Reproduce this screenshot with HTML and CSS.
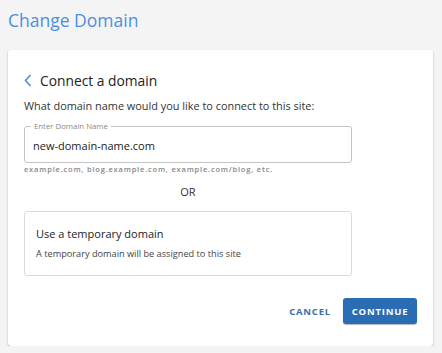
FILE: index.html
```html
<!DOCTYPE html>
<html>
<head>
<meta charset="utf-8">
<link rel="stylesheet" href="styles.css">
</head>
<body>
<div class="page">
  <h1 class="title">Change Domain</h1>
  <div class="card">
    <div class="head">
      <svg class="back" width="8" height="13" viewBox="0 0 8 13"><path d="M6.5 1 L1.5 6.5 L6.5 12" fill="none" stroke="#4a8fe0" stroke-width="1.6"/></svg>
      <span class="head-text">Connect a domain</span>
    </div>
    <p class="question">What domain name would you like to connect to this site:</p>
    <div class="field">
      <span class="field-label">Enter Domain Name</span>
      <div class="field-value">new-domain-name.com</div>
    </div>
    <div class="hint">example.com, blog.example.com, example.com/blog, etc.</div>
    <div class="or">OR</div>
    <div class="temp">
      <div class="temp-title">Use a temporary domain</div>
      <div class="temp-desc">A temporary domain will be assigned to this site</div>
    </div>
    <div class="actions">
      <button class="btn-cancel">CANCEL</button>
      <button class="btn-continue">CONTINUE</button>
    </div>
  </div>
</div>
</body>
</html>
```

FILE: styles.css
```css
html, body {
  margin: 0;
  padding: 0;
  background: #f4f4f4;
  font-family: "Open Sans", "Noto Sans", sans-serif;
}
.page {
  padding: 8px 9px 0 8px;
}
.title {
  margin: 0;
  height: 42px;
  font-size: 17.5px;
  font-weight: 400;
  color: #4a90e2;
  line-height: 24px;
}
.card {
  background: #fff;
  border-radius: 3px;
  box-shadow: 0 1px 2px rgba(0,0,0,0.35);
  height: 296px;
  box-sizing: border-box;
  padding: 20px 16px 0 16px;
}
.head {
  display: flex;
  align-items: center;
  gap: 8px;
  height: 20px;
}
.back {
  display: block;
}
.head-text {
  font-size: 13.8px;
  font-weight: 500;
  color: #222;
}
.question {
  margin: 8px 0 0 0;
  font-size: 10.9px;
  color: #333;
  line-height: 16px;
}
.field {
  position: relative;
  margin-top: 12px;
  width: 328px;
  height: 37px;
  box-sizing: border-box;
  border: 1px solid #c4c4c4;
  border-radius: 3px;
  display: flex;
  align-items: center;
  padding-left: 8px;
}
.field-label {
  position: absolute;
  left: 6px;
  top: -6px;
  padding: 0 3px;
  background: #fff;
  font-size: 7.8px;
  color: #888;
  line-height: 10px;
}
.field-value {
  font-size: 11px;
  color: #222;
  padding-top: 2px;
}
.hint {
  margin-top: 0;
  font-size: 7.5px;
  font-weight: 600;
  letter-spacing: 0.8px;
  color: #888;
  line-height: 12px;
}
.or {
  width: 328px;
  text-align: center;
  font-size: 11px;
  color: #333;
  margin-top: 9px;
  line-height: 16px;
}
.temp {
  margin-top: 11px;
  width: 328px;
  height: 65px;
  box-sizing: border-box;
  border: 1px solid #dcdcdc;
  border-radius: 3px;
  padding: 13px 12px 0 11px;
}
.temp-title {
  font-size: 11px;
  font-weight: 500;
  color: #222;
  line-height: 18px;
}
.temp-desc {
  margin-top: 4px;
  font-size: 9.2px;
  color: #444;
  line-height: 13px;
}
.actions {
  display: flex;
  justify-content: flex-end;
  align-items: center;
  gap: 12px;
  margin-top: 22px;
  width: 393px;
}
.btn-cancel, .btn-continue {
  font-family: "Open Sans", "Noto Sans", sans-serif;
  font-size: 9.5px;
  font-weight: 700;
  letter-spacing: 0.8px;
  border: none;
  cursor: pointer;
}
.btn-cancel {
  background: none;
  color: #3a6fa8;
  padding: 0;
}
.btn-continue {
  background: #2a6db4;
  color: #fff;
  height: 26px;
  width: 74px;
  border-radius: 3px;
  box-shadow: 0 1px 1px rgba(0,0,0,0.3);
  padding: 0;
}
```
